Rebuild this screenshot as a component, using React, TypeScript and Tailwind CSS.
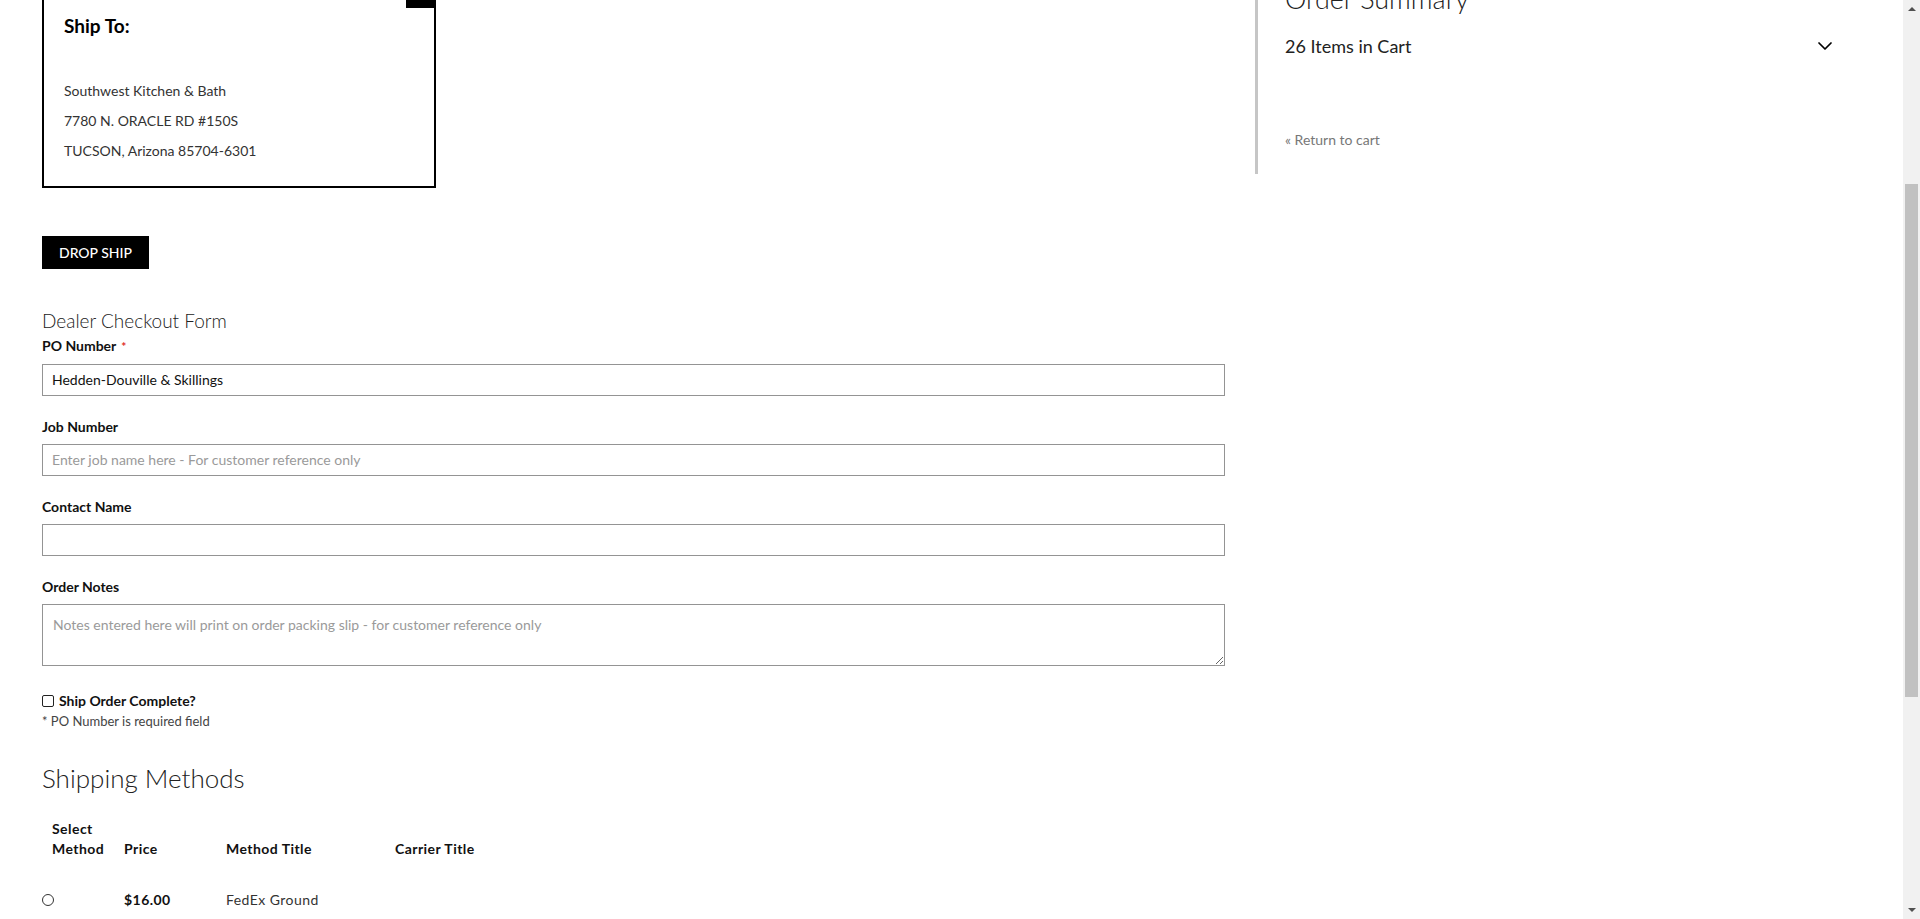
import { ChevronDown } from "lucide-react"

const inputCls =
  "block w-full h-[32px] border border-[#949494] bg-white pl-[9px] text-[14px] text-[#111] outline-none placeholder:text-[#9a9a9a]"

function Field({ label, required, children }: { label: string; required?: boolean; children: React.ReactNode }) {
  return (
    <div className="flex flex-col">
      <label className="mb-[9px] text-[14px] leading-[17px] font-bold text-[#111]">
        {label}
        {required && <span className="ml-[5px] text-[12px] text-[#e02b27]">*</span>}
      </label>
      {children}
    </div>
  )
}

function Scrollbar() {
  return (
    <div className="flex h-[919px] w-[17px] flex-none flex-col bg-[#f1f1f1]">
      <div className="flex h-[17px] items-center justify-center">
        <svg width="8" height="5" viewBox="0 0 8 5"><path d="M0 5 L4 1 L8 5 Z" fill="#505050" /></svg>
      </div>
      <div className="h-[167px]" />
      <div className="mx-[2px] h-[513px] bg-[#c1c1c1]" />
      <div className="flex-1" />
      <div className="flex h-[17px] items-center justify-center">
        <svg width="8" height="5" viewBox="0 0 8 5"><path d="M0 0 L4 4 L8 0 Z" fill="#505050" /></svg>
      </div>
    </div>
  )
}

export default function App() {
  return (
    <div className="flex h-[919px] w-full overflow-hidden bg-white font-['Lato','Noto_Sans',sans-serif] text-[#111]">
      <div className="flex flex-1">
        {/* checkout column */}
        <div className="ml-[42px] flex w-[1183px] flex-none flex-col">
          <div className="relative -mt-[10px] w-[394px] border-2 border-black pt-[23px] pb-[20px] pl-[20px]">
            <div className="absolute -top-[2px] -right-[2px] h-[18px] w-[30px] bg-black" />
            <h3 className="text-[19px] leading-[1.2] font-bold text-black">Ship To:</h3>
            <div className="mt-[38px] text-[14px] leading-[30px] text-[#333]">
              <p>Southwest Kitchen &amp; Bath</p>
              <p>7780 N. ORACLE RD #150S</p>
              <p>TUCSON, Arizona 85704-6301</p>
            </div>
          </div>

          <button className="mt-[48px] flex h-[33px] w-[107px] items-center justify-center bg-black text-[14px] font-medium text-white">
            DROP SHIP
          </button>

          <h2 className="mt-[41px] text-[19px] leading-[1.2] font-light text-[#222]">Dealer Checkout Form</h2>

          <div className="mt-[4px] flex flex-col gap-[22px]">
            <Field label="PO Number" required>
              <input className={inputCls} defaultValue="Hedden-Douville & Skillings" />
            </Field>
            <Field label="Job Number">
              <input className={inputCls} placeholder="Enter job name here - For customer reference only" />
            </Field>
            <Field label="Contact Name">
              <input className={inputCls} />
            </Field>
            <Field label="Order Notes">
              <textarea
                className="block h-[62px] w-full border border-[#949494] bg-white pt-[9px] pl-[10px] text-[14px] outline-none placeholder:text-[#9a9a9a]"
                placeholder="Notes entered here will print on order packing slip - for customer reference only"
              />
            </Field>
          </div>

          <label className="mt-[25px] flex h-[20px] items-center gap-[5px] text-[14px] leading-[20px] font-bold text-[#111]">
            <input type="checkbox" className="h-[12px] w-[12px] appearance-none rounded-[2px] border border-[#222] bg-white" />
            Ship Order Complete?
          </label>
          <p className="text-[13px] leading-[20px] text-[#444]">* PO Number is required field</p>

          <h2 className="mt-[32px] text-[26px] leading-[1.2] font-light text-[#222]">Shipping Methods</h2>

          <div className="mt-[25px] grid grid-cols-[72px_102px_169px_200px] text-[14px] leading-[20px] tracking-[0.45px]">
            <div className="flex items-end pl-[10px] font-bold">Select<br />Method</div>
            <div className="flex items-end pl-[10px] font-bold">Price</div>
            <div className="flex items-end pl-[10px] font-bold">Method Title</div>
            <div className="flex items-end pl-[10px] font-bold">Carrier Title</div>

            <div className="mt-[31px] flex h-[20px] items-center">
              <input type="radio" name="ship" className="mt-[1px] h-[12px] w-[12px] appearance-none rounded-full border border-[#333] bg-white" />
            </div>
            <div className="mt-[31px] pl-[10px] font-bold">$16.00</div>
            <div className="mt-[31px] pl-[10px] text-[#333]">FedEx Ground</div>
            <div className="mt-[31px] pl-[10px]" />
          </div>
        </div>

        {/* order summary sidebar */}
        <aside className="-mt-[40px] ml-[30px] flex h-[214px] w-[582px] flex-none flex-col border-l-[3px] border-[#c6c6c6] pt-[23px] pl-[27px]">
          <h2 className="text-[27px] leading-[1.2] font-light text-[#222]">Order Summary</h2>
          <div className="mt-[19px] flex items-center justify-between">
            <span className="text-[18px] leading-[1.2] text-[#222]">26 Items in Cart</span>
            <ChevronDown size={24} strokeWidth={1.75} className="text-black" />
          </div>
          <a className="mt-[74px] text-[14px] leading-[1.2] text-[#777]">« Return to cart</a>
        </aside>
      </div>
      <Scrollbar />
    </div>
  )
}
